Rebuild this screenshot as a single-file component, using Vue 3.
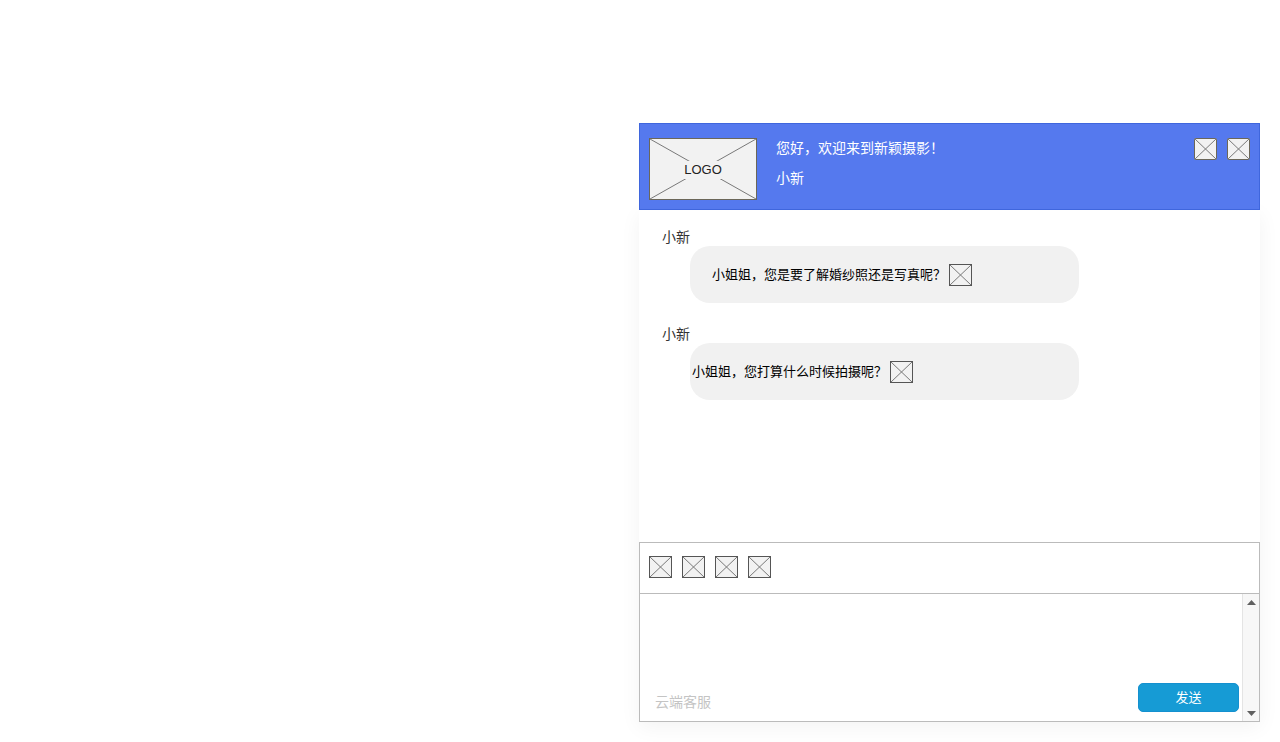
<template>
  <main class="page">
    <section class="chat">
      <header class="chat-header">
        <svg class="logo" viewBox="0 0 108 62" role="img" aria-label="LOGO">
          <rect x="0.5" y="0.5" width="107" height="61" fill="#f2f2f2" stroke="#6b6759" />
          <path d="M1 1L107 61M107 1L1 61" stroke="#797979" />
          <rect x="33" y="23" width="42" height="18" fill="#f2f2f2" />
          <text x="54" y="36" text-anchor="middle">LOGO</text>
        </svg>
        <div class="greeting">
          <p>您好，欢迎来到新颖摄影！</p>
          <p>{{ agent }}</p>
        </div>
        <div class="window-actions">
          <button v-for="name in windowActions" :key="name" type="button" class="icon-btn" :aria-label="name">
            <svg viewBox="0 0 23 22">
              <rect x="0.5" y="0.5" width="22" height="21" rx="1" />
              <path d="M1 1L22 21M22 1L1 21" />
            </svg>
          </button>
        </div>
      </header>

      <div class="chat-body">
        <div class="messages">
          <div v-for="message in messages" :key="message.id" class="message">
            <div class="message-author">{{ agent }}</div>
            <div class="bubble" :class="{ indented: message.indented }">
              <span>{{ message.text }}</span>
              <svg class="bubble-icon" viewBox="0 0 23 22">
                <rect x="0.5" y="0.5" width="22" height="21" />
                <path d="M1 1L22 21M22 1L1 21" />
              </svg>
            </div>
          </div>
        </div>

        <div class="toolbar">
          <button v-for="name in tools" :key="name" type="button" class="icon-btn" :aria-label="name">
            <svg viewBox="0 0 23 22">
              <rect x="0.5" y="0.5" width="22" height="21" />
              <path d="M1 1L22 21M22 1L1 21" />
            </svg>
          </button>
        </div>

        <form class="editor" @submit.prevent="send">
          <div class="editor-main">
            <textarea v-model="draft" aria-label="消息"></textarea>
            <div class="editor-footer">
              <span class="brand">云端客服</span>
              <button type="submit" class="send-btn">发送</button>
            </div>
          </div>
          <div class="scrollbar">
            <button type="button" aria-label="向上滚动">
              <svg viewBox="0 0 9 5"><path d="M0 5L4.5 0L9 5Z" /></svg>
            </button>
            <button type="button" aria-label="向下滚动">
              <svg viewBox="0 0 9 5"><path d="M0 0L4.5 5L9 0Z" /></svg>
            </button>
          </div>
        </form>
      </div>
    </section>
  </main>
</template>

<script setup>
import { ref } from 'vue';

const agent = '小新';
const draft = ref('');

const windowActions = ['最小化', '关闭'];
const tools = ['表情', '图片', '文件', '评价'];

const messages = ref([
  { id: 1, text: '小姐姐，您是要了解婚纱照还是写真呢？', indented: true },
  { id: 2, text: '小姐姐，您打算什么时候拍摄呢？', indented: false }
]);

const send = () => {
  const text = draft.value.trim();
  if (!text) return;
  messages.value.push({ id: Date.now(), text, indented: true });
  draft.value = '';
};
</script>

<style>
body {
  margin: 0;
  background: #fff;
}
</style>

<style scoped>
.page {
  box-sizing: border-box;
  display: flex;
  min-height: 100vh;
  padding: 123px 20px 20px calc(50% - 1px);
  font-family: "Liberation Sans", "Noto Sans CJK SC", sans-serif;
  font-size: 14px;
  line-height: 20px;
  color: #333;
}

.chat {
  flex: 1;
  min-width: 0;
  display: flex;
  flex-direction: column;
}

.chat-header {
  box-sizing: border-box;
  display: flex;
  align-items: flex-start;
  height: 87px;
  padding: 14px 9px;
  background: #5579ee;
  border: 1px solid #3f66dd;
}

.logo {
  flex: none;
  width: 108px;
  height: 62px;
}

.logo text {
  font-size: 13px;
  fill: #222;
}

.greeting {
  flex: 1;
  margin-left: 19px;
  color: #fff;
}

.greeting p {
  margin: 0 0 10px;
}

.window-actions {
  display: flex;
  gap: 10px;
}

.icon-btn {
  flex: none;
  width: 23px;
  height: 22px;
  padding: 0;
  border: 0;
  background: none;
  cursor: pointer;
}

.icon-btn svg,
.bubble-icon {
  display: block;
  flex: none;
  width: 23px;
  height: 22px;
  fill: #f2f2f2;
  stroke: #555;
}

.window-actions svg {
  stroke: #6b6759;
}

.icon-btn path,
.bubble-icon path {
  stroke: #797979;
}

.chat-body {
  flex: 1;
  display: flex;
  flex-direction: column;
  background: #fff;
  box-shadow: 0 5px 20px rgba(0, 0, 0, 0.05);
}

.chat-header {
  position: relative;
}

.messages {
  flex: 1;
  padding: 18px 23px 0;
}

.message {
  margin-bottom: 22px;
}

.message-author {
  line-height: 18px;
}

.bubble {
  box-sizing: border-box;
  display: flex;
  align-items: center;
  gap: 3px;
  width: calc(68% - 2px);
  height: 57px;
  margin-left: 28px;
  padding: 0 2px;
  border-radius: 20px;
  background: #f1f1f1;
  font-size: 13px;
  line-height: 22px;
  color: #000;
}

.bubble.indented {
  padding-left: 22px;
}

.toolbar {
  display: flex;
  gap: 10px;
  padding: 13px 9px 15px;
  border: 1px solid #bbb;
}

.editor {
  display: flex;
  height: 127px;
  border: 1px solid #bbb;
  border-top: 0;
}

.editor-main {
  flex: 1;
  display: flex;
  flex-direction: column;
}

textarea {
  flex: 1;
  box-sizing: border-box;
  width: 100%;
  padding: 8px 15px;
  border: 0;
  outline: 0;
  resize: none;
  overflow: hidden;
  background: none;
  font: inherit;
}

.editor-footer {
  display: flex;
  align-items: center;
  justify-content: space-between;
  padding: 0 3px 9px 15px;
}

.brand {
  padding-top: 10px;
  color: #c4c4c4;
}

.send-btn {
  width: 101px;
  height: 29px;
  padding: 0 0 2px;
  border: 1px solid #1490cf;
  border-radius: 5px;
  background: #169bd5;
  color: #fff;
  font-family: inherit;
  font-size: 13px;
  cursor: pointer;
}

.scrollbar {
  box-sizing: border-box;
  display: flex;
  flex-direction: column;
  justify-content: space-between;
  width: 17px;
  background: #f7f7f7;
  border-left: 1px solid #e4e4e4;
}

.scrollbar button {
  display: flex;
  align-items: center;
  justify-content: center;
  height: 16px;
  padding: 0;
  border: 0;
  background: none;
}

.scrollbar svg {
  width: 9px;
  height: 5px;
  fill: #606060;
}
</style>
